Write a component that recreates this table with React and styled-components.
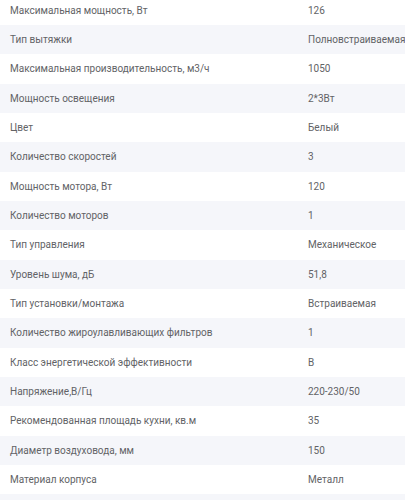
import React from "react";
import styled, { createGlobalStyle } from "styled-components";

const GlobalStyle = createGlobalStyle`
  html, body {
    margin: 0;
    padding: 0;
    background: #ffffff;
  }
  body {
    font-family: Roboto, "Noto Sans", sans-serif;
    overflow: hidden;
  }
`;

const specs = [
  ["Максимальная мощность, Вт", "126"],
  ["Тип вытяжки", "Полновстраиваемая"],
  ["Максимальная производительность, м3/ч", "1050"],
  ["Мощность освещения", "2*3Вт"],
  ["Цвет", "Белый"],
  ["Количество скоростей", "3"],
  ["Мощность мотора, Вт", "120"],
  ["Количество моторов", "1"],
  ["Тип управления", "Механическое"],
  ["Уровень шума, дБ", "51,8"],
  ["Тип установки/монтажа", "Встраиваемая"],
  ["Количество жироулавливающих фильтров", "1"],
  ["Класс энергетической эффективности", "B"],
  ["Напряжение,В/Гц", "220-230/50"],
  ["Рекомендованная площадь кухни, кв.м", "35"],
  ["Диаметр воздуховода, мм", "150"],
  ["Материал корпуса", "Металл"],
  ["", ""],
];

const SpecList = styled.div`
  display: flex;
  flex-direction: column;
  margin-top: -4.33px;
`;

const SpecRow = styled.div`
  display: grid;
  grid-template-columns: 308px 1fr;
  align-items: center;
  height: 29.33px;
  background: ${({ $shaded }) => ($shaded ? "#f5f6fa" : "#ffffff")};
`;

const Label = styled.span`
  padding-left: 10px;
  font-size: 10px;
  color: #626366;
  white-space: nowrap;
`;

const Value = styled.span`
  font-size: 10px;
  color: #626366;
  white-space: nowrap;
`;

export default function App() {
  return (
    <>
      <GlobalStyle />
      <SpecList>
        {specs.map(([label, value], i) => (
          <SpecRow key={i} $shaded={i % 2 === 1}>
            <Label>{label}</Label>
            <Value>{value}</Value>
          </SpecRow>
        ))}
      </SpecList>
    </>
  );
}
